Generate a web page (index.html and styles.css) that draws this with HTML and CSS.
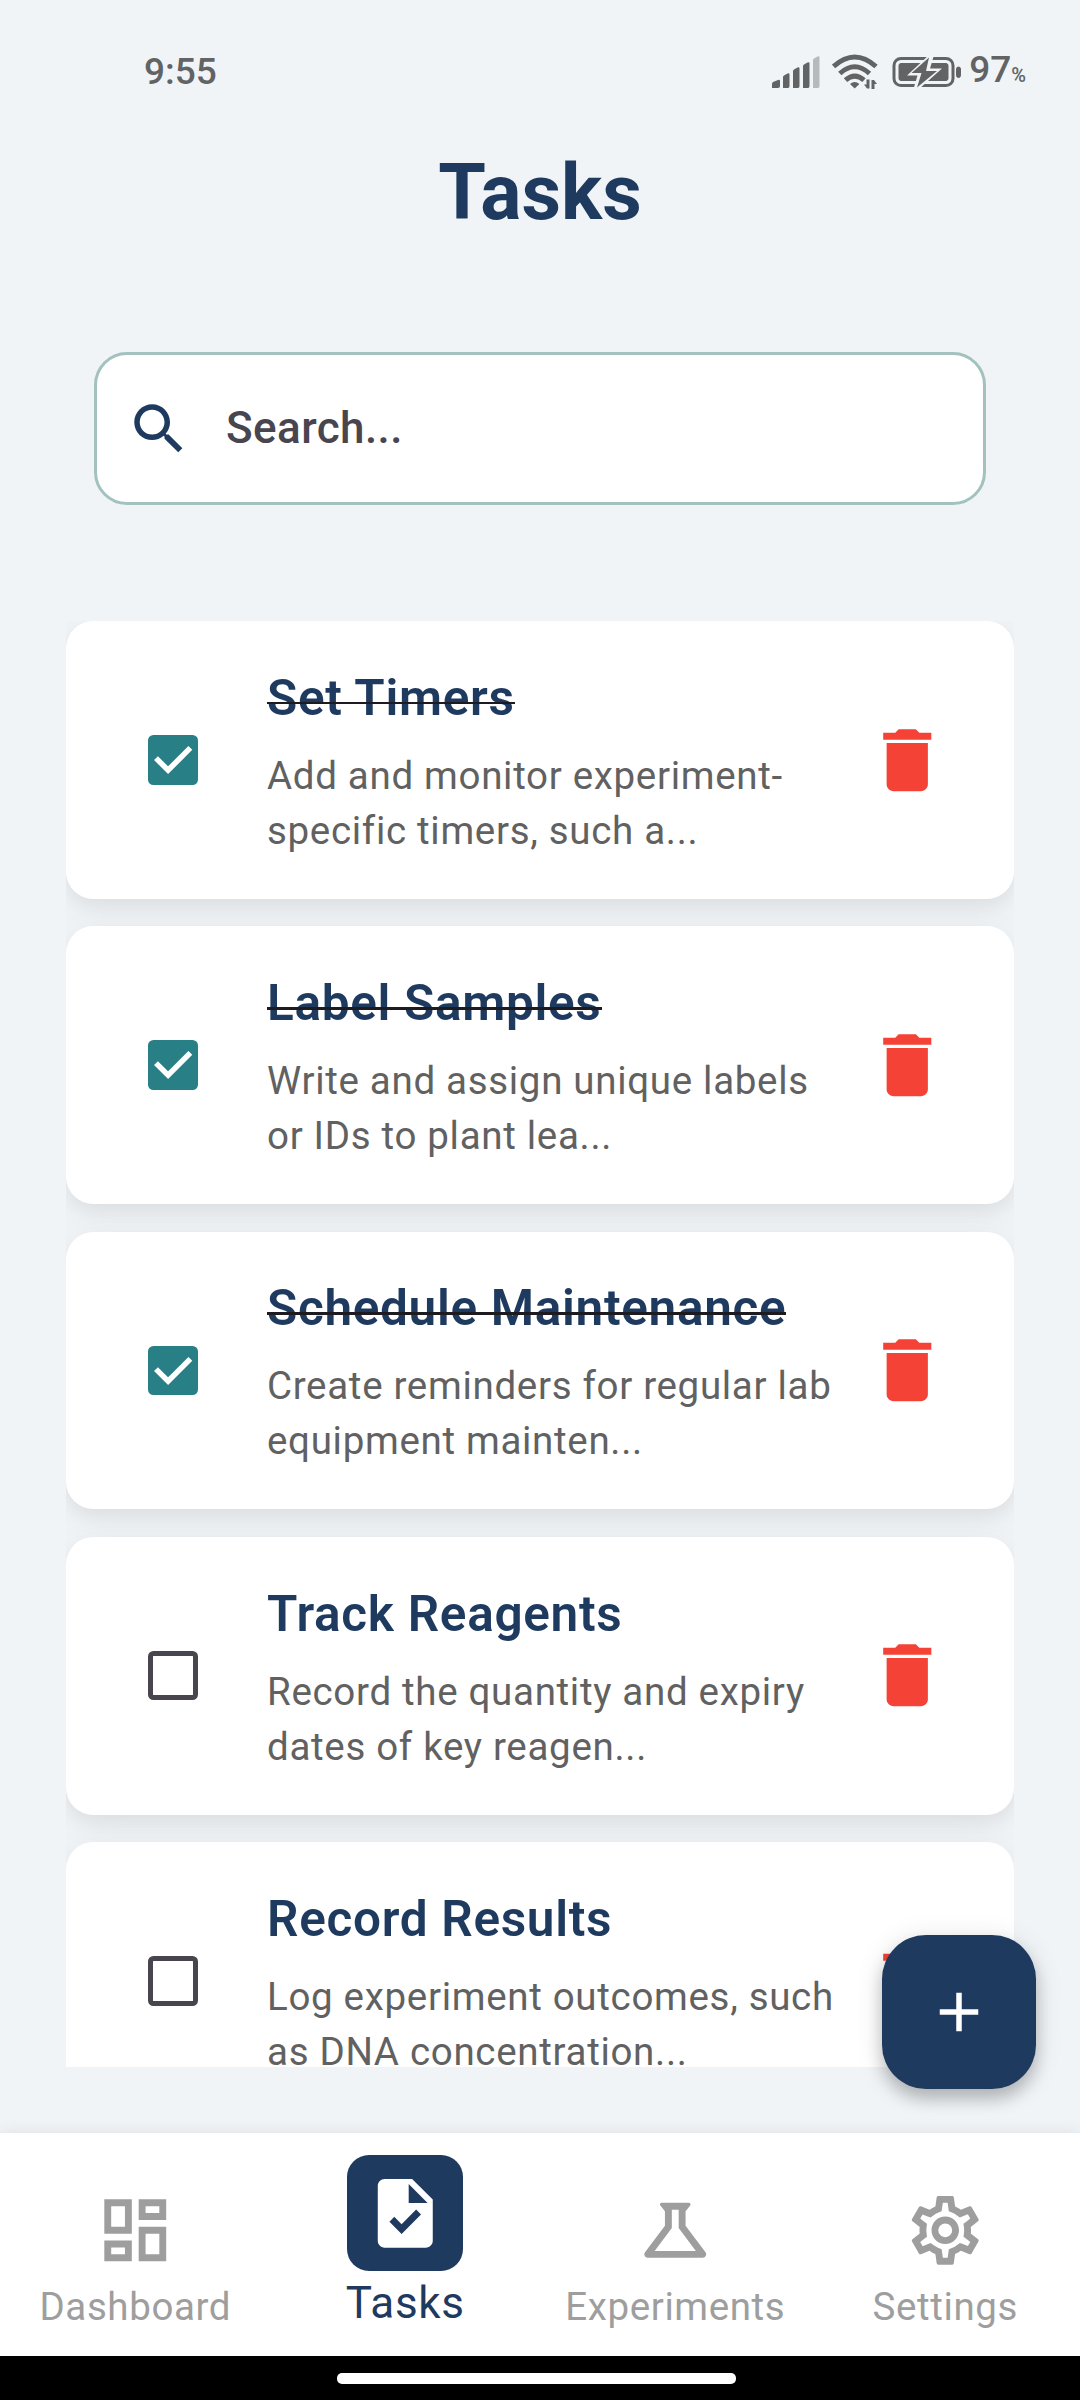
FILE: index.html
```html
<!DOCTYPE html>
<html lang="en">
<head>
<meta charset="utf-8">
<title>Tasks</title>
<link rel="stylesheet" href="styles.css">
</head>
<body>
<svg class="sprite" aria-hidden="true">
  <symbol id="delete" viewBox="0 0 24 24"><path d="M6 19c0 1.100.9 2 2 2h8c1.100 0 2-.9 2-2V7H6v12zM19 4h-3.500l-1-1h-5l-1 1H5v2h14V4z"/></symbol>
  <symbol id="check" viewBox="0 0 18 18"><path d="M2.900 8.400 7.300 12.800 15.400 4.700" fill="none" stroke="#fff" stroke-width="2"/></symbol>
</svg>

<div class="status">
  <span class="clock">9:55</span>
  <div class="indicators">
    <svg class="signal" viewBox="0 0 48 32">
      <path d="M0 32v-4q0-1 1-2l5-2q2-1 2 1v5q0 2-2 2zM11 32V21q0-1 1-1.500l3.500-2q2-1 2 1V30q0 2-1.500 2zM21 32V15q0-1 1-1.500l3.500-2q2-1 2 1V30q0 2-1.500 2zM31 32V10q0-1 1-1.500l3.500-2q2-1 2 1V30q0 2-1.500 2z"/>
      <path class="faint" d="M41 32V4q0-1 1-1.500l3.500-2q2-1 2 1V30q0 2-1.500 2z"/>
    </svg>
    <svg class="wifi" viewBox="0 0 46 36">
      <g fill="none" stroke-width="5">
        <path d="M1.500 12.500Q22.700-6.500 44 12.500"/>
        <path d="M7.800 19.500Q22.700 6 37.500 19.500"/>
        <path d="M13.500 26.200Q22.700 18 32 26.200"/>
      </g>
      <path d="M18 30q4.700-4 9.400 0L22.700 34.500z"/>
      <path d="M37.500 25.500v9h-2.500l-3-4h2.500v-5zM39.500 35v-9H42l3 4h-2.500v5z"/>
    </svg>
    <svg class="battery" viewBox="0 0 70 34">
      <rect x="2" y="3.500" width="59" height="27" rx="7" fill="none" stroke-width="3"/>
      <rect x="7" y="8.500" width="49" height="17" rx="2" stroke="none"/>
      <rect x="64.500" y="12" width="4" height="10.500" rx="2" stroke="none"/>
      <path class="bolt" d="M37 0 15 20.500h10.500L21.500 34H27l23-20.500H38L42 0z"/>
      <path d="M37 2.500 19.500 18h10L25 32.500 45 16H34z"/>
    </svg>
    <span class="level">97<small>%</small></span>
  </div>
</div>

<h1 class="title">Tasks</h1>

<div class="search">
  <svg viewBox="0 0 24 24"><path d="M15.500 14h-.79l-.28-.27C15.410 12.590 16 11.110 16 9.500 16 5.910 13.090 3 9.500 3S3 5.910 3 9.500 5.910 16 9.500 16c1.610 0 3.090-.59 4.230-1.570l.27.28v.79l5 4.990L20.490 19l-4.990-5zm-6 0C7.010 14 5 11.990 5 9.500S7.010 5 9.500 5 14 7.010 14 9.500 11.990 14 9.500 14z"/></svg>
  <span>Search...</span>
</div>

<ul class="tasks">
  <li class="card">
    <span class="box checked"><svg><use href="#check"/></svg></span>
    <div class="copy"><h2 class="done">Set Timers</h2><p>Add and monitor experiment-<br>specific timers, such a...</p></div>
    <svg class="trash"><use href="#delete"/></svg>
  </li>
  <li class="card">
    <span class="box checked"><svg><use href="#check"/></svg></span>
    <div class="copy"><h2 class="done">Label Samples</h2><p>Write and assign unique labels<br>or IDs to plant lea...</p></div>
    <svg class="trash"><use href="#delete"/></svg>
  </li>
  <li class="card">
    <span class="box checked"><svg><use href="#check"/></svg></span>
    <div class="copy"><h2 class="done">Schedule Maintenance</h2><p>Create reminders for regular lab<br>equipment mainten...</p></div>
    <svg class="trash"><use href="#delete"/></svg>
  </li>
  <li class="card">
    <span class="box"></span>
    <div class="copy"><h2>Track Reagents</h2><p>Record the quantity and expiry<br>dates of key reagen...</p></div>
    <svg class="trash"><use href="#delete"/></svg>
  </li>
  <li class="card">
    <span class="box"></span>
    <div class="copy"><h2>Record Results</h2><p>Log experiment outcomes, such<br>as DNA concentration...</p></div>
    <svg class="trash"><use href="#delete"/></svg>
  </li>
</ul>

<button class="fab" aria-label="Add task"><svg viewBox="0 0 24 24"><path d="M19 13h-6v6h-2v-6H5v-2h6V5h2v6h6v2z"/></svg></button>

<nav class="nav">
  <a class="item">
    <svg viewBox="0 0 24 24"><path d="M19 5v2h-4V5h4M9 5v6H5V5h4m10 8v6h-4v-6h4M9 17v2H5v-2h4M21 3h-8v6h8V3zM11 3H3v10h8V3zm10 8h-8v10h8V11zm-10 4H3v6h8v-6z"/></svg>
    <span>Dashboard</span>
  </a>
  <a class="item active">
    <span class="tile"><svg viewBox="0 0 24 24"><path d="M14 2H6c-1.100 0-1.990.9-1.990 2L4 20c0 1.100.89 2 1.990 2H18c1.100 0 2-.9 2-2V8l-6-6zm-3.060 16L7.400 14.460l1.410-1.410 2.120 2.120 4.240-4.240 1.410 1.410L10.940 18zM13 9V3.500L18.500 9H13z"/></svg></span>
    <span>Tasks</span>
  </a>
  <a class="item">
    <svg viewBox="0 0 24 24"><path d="M13 11.330L18 18H6l5-6.670V6h2m2.960-2H8.040c-.42 0-.65.48-.39.81L9 6.500v4.170L3.200 18.400c-.49.66-.02 1.600.8 1.600h16c.82 0 1.290-.94.8-1.600L15 10.670V6.500l1.350-1.690c.26-.33.03-.81-.39-.81z"/></svg>
    <span>Experiments</span>
  </a>
  <a class="item">
    <svg viewBox="0 0 24 24"><path d="M19.430 12.980c.04-.32.07-.64.07-.98 0-.34-.03-.66-.07-.98l2.110-1.650c.19-.15.24-.42.12-.64l-2-3.460c-.09-.16-.26-.25-.44-.25-.06 0-.12.01-.17.03l-2.490 1c-.52-.4-1.080-.73-1.690-.98l-.38-2.650C14.460 2.180 14.250 2 14 2h-4c-.25 0-.46.18-.49.42l-.38 2.650c-.61.25-1.170.59-1.690.98l-2.490-1c-.06-.02-.12-.03-.18-.03-.17 0-.34.09-.43.25l-2 3.460c-.13.22-.07.49.12.64l2.110 1.650c-.04.32-.07.65-.07.98 0 .33.03.66.07.98l-2.110 1.650c-.19.15-.24.42-.12.64l2 3.460c.09.16.26.25.44.25.06 0 .12-.01.17-.03l2.490-1c.52.4 1.080.73 1.690.98l.38 2.650c.03.24.24.42.49.42h4c.25 0 .46-.18.49-.42l.38-2.650c.61-.25 1.170-.59 1.690-.98l2.490 1c.06.02.12.03.18.03.17 0 .34-.09.43-.25l2-3.460c.12-.22.07-.49-.12-.64l-2.110-1.650zm-1.980-1.710c.04.31.05.52.05.73 0 .21-.02.43-.05.73l-.14 1.130.89.7 1.080.84-.7 1.210-1.270-.51-1.040-.42-.9.68c-.43.32-.84.56-1.250.73l-1.060.43-.16 1.130-.2 1.350h-1.400l-.19-1.350-.16-1.130-1.060-.43c-.43-.18-.83-.41-1.230-.71l-.91-.7-1.060.43-1.270.51-.7-1.210 1.080-.84.89-.7-.14-1.130c-.03-.31-.05-.54-.05-.74s.02-.43.05-.73l.14-1.130-.89-.7-1.080-.84.7-1.210 1.270.51 1.040.42.9-.68c.43-.32.84-.56 1.250-.73l1.060-.43.16-1.130.2-1.350h1.390l.19 1.350.16 1.130 1.060.43c.43.18.83.41 1.230.71l.91.7 1.060-.43 1.270-.51.7 1.210-1.070.85-.89.7.14 1.130zM12 8c-2.210 0-4 1.790-4 4s1.790 4 4 4 4-1.790 4-4-1.790-4-4-4zm0 6c-1.100 0-2-.9-2-2s.9-2 2-2 2 .9 2 2-.9 2-2 2z"/></svg>
    <span>Settings</span>
  </a>
</nav>
<div class="gesture"><span></span></div>
</body>
</html>
```
FILE: styles.css
```css
* { box-sizing: border-box; margin: 0; padding: 0; }
svg { display: block; fill: currentColor; }
.sprite { display: none; }

body {
  position: relative;
  display: flex;
  flex-direction: column;
  width: 1080px;
  height: 2400px;
  overflow: hidden;
  background: #f0f4f7;
  color: #1f3a5f;
  font-family: Roboto, "Liberation Sans", sans-serif;
}

.status {
  display: flex;
  justify-content: space-between;
  align-items: center;
  height: 98px;
  padding: 46px 54px 0 144px;
  color: #626365;
  font-weight: 500;
  font-size: 37px;
  line-height: 50px;
}
.indicators { display: flex; align-items: center; }
.signal { width: 48px; height: 32px; margin-right: 12px; }
.signal .faint { opacity: .4; }
.wifi { width: 46px; height: 36px; margin-right: 14px; }
.wifi g { stroke: currentColor; }
.battery { width: 70px; height: 34px; margin-right: 7px; }
.battery rect { stroke: currentColor; }
.battery .bolt { fill: #f0f4f7; }
.level { display: flex; align-items: baseline; padding-top: 1px; }
.level small { font-size: 20px; }

.title {
  height: 90px;
  margin-top: 50px;
  font-size: 77px;
  line-height: 90px;
  font-weight: 700;
  text-align: center;
}

.search {
  display: flex;
  align-items: center;
  gap: 34px;
  height: 153px;
  margin: 114px 94px 0;
  padding-left: 29px;
  border: 3px solid #a3c2bd;
  border-radius: 33px;
  background: #fff;
}
.search svg { width: 66px; height: 66px; }
.search span { padding-bottom: 2px; color: #49454f; font-size: 44px; font-weight: 500; letter-spacing: .4px; }

.tasks {
  display: flex;
  flex-direction: column;
  gap: 27.500px;
  height: 1446px;
  margin: 116px 66px 0;
  overflow: hidden;
  list-style: none;
}
.card {
  display: flex;
  flex: none;
  align-items: center;
  height: 277.750px;
  padding: 0 66px 0 82px;
  border-radius: 27.500px;
  background: #fff;
  box-shadow: 0 9px 16px rgba(0, 0, 0, .04), 0 8px 36px rgba(0, 0, 0, .06);
}
.box {
  flex: none;
  width: 49.500px;
  height: 49.500px;
  border: 5.500px solid #49454f;
  border-radius: 5.500px;
}
.checked { border: 0; background: #287f85; }
.checked svg { width: 100%; height: 100%; }
.copy { flex: 1; padding-left: 69.500px; white-space: nowrap; }
.copy h2 {
  width: max-content;
  font-size: 49.500px;
  line-height: 74.250px;
  font-weight: 600;
  letter-spacing: .6875px;
}
/* The strike runs over the letters, just below their middle */
.copy .done { position: relative; }
.copy .done::after {
  content: "";
  position: absolute;
  left: 0;
  right: 0;
  top: 41px;
  height: 2.500px;
  background: #1d1b20;
}
.copy p {
  margin-top: 12.750px;
  padding-bottom: 1px;
  color: #616161;
  font-size: 38.500px;
  line-height: 55px;
  letter-spacing: .6875px;
}
.trash { flex: none; width: 82.500px; height: 82.500px; color: #f44336; }

.fab {
  position: absolute;
  left: 882px;
  top: 1935px;
  display: grid;
  place-items: center;
  width: 154px;
  height: 154px;
  border: 0;
  border-radius: 44px;
  background: #1f3a5f;
  color: #fff;
  box-shadow: 0 10px 16px rgba(0, 0, 0, .2), 0 4px 28px rgba(0, 0, 0, .12);
}
.fab svg { width: 66px; height: 66px; }

.nav {
  display: grid;
  grid-template-columns: repeat(4, 1fr);
  height: 223px;
  margin-top: 66px;
  background: #fff;
  box-shadow: 0 0 16px rgba(0, 0, 0, .08);
}
.item {
  display: flex;
  flex-direction: column;
  align-items: center;
  padding-top: 55.500px;
  color: #9e9e9e;
  font-size: 38.500px;
  line-height: 55px;
  letter-spacing: .6px;
}
.item svg { width: 82.500px; height: 82.500px; }
.item > span:last-child { margin-top: 7.500px; padding-left: .6px; }
.item.active { padding-top: 22px; color: #1f3a5f; font-size: 44px; letter-spacing: .6875px; }
.tile {
  display: grid;
  place-items: center;
  width: 115.500px;
  height: 115.500px;
  border-radius: 22px;
  background: #1f3a5f;
  color: #fff;
}
.item.active > span:last-child { margin-top: 5px; }

.gesture { height: 44px; padding: 17px 0 0 337px; background: #000; }
.gesture span { display: block; width: 399px; height: 11px; border-radius: 5px; background: #fff; }
```
